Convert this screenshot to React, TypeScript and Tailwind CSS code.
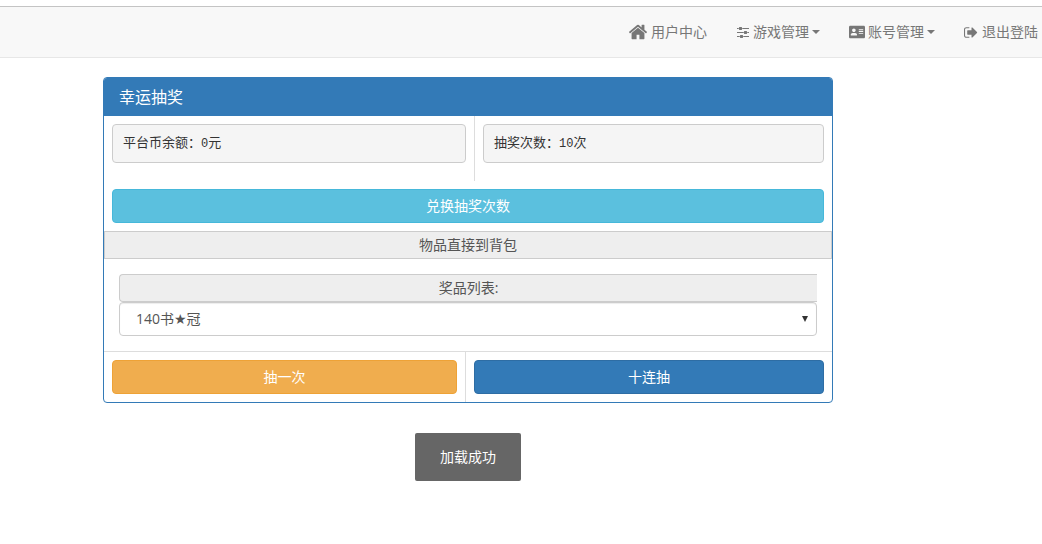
import type { ReactNode } from "react";
import { FaAddressCard } from "react-icons/fa";

const HOME =
  "M1472 992v480q0 26-19 45t-45 19h-384v-384h-256v384h-384q-26 0-45-19t-19-45v-480q0-1 .5-3t.5-3l575-474 575 474q1 2 1 6zm223-69l-62 74q-8 9-21 11h-3q-13 0-21-7l-692-577-692 577q-12 8-24 7-13-2-21-11l-62-74q-8-10-7-23.5t11-21.5l719-599q32-26 76-26t76 26l244 204v-195q0-14 9-23t23-9h192q14 0 23 9t9 23v408l219 182q10 8 11 21.5t-7 23.5z";
const SLIDERS =
  "M480 1408v128h-352v-128h352zm352-128q26 0 45 19t19 45v256q0 26-19 45t-45 19h-256q-26 0-45-19t-19-45v-256q0-26 19-45t45-19h256zm160-384v128h-864v-128h864zm-640-512v128h-224v-128h224zm1312 1024v128h-736v-128h736zm-960-1152q26 0 45 19t19 45v256q0 26-19 45t-45 19h-256q-26 0-45-19t-19-45v-256q0-26 19-45t45-19h256zm640 512q26 0 45 19t19 45v256q0 26-19 45t-45 19h-256q-26 0-45-19t-19-45v-256q0-26 19-45t45-19h256zm320 128v128h-224v-128h224zm0-512v128h-864v-128h864z";
const SIGN_OUT =
  "M640 1440q0 4 1 20t.5 26.5-3 23.5-10 19.5-20.5 6.5h-320q-119 0-203.5-84.5t-84.5-203.5v-704q0-119 84.5-203.5t203.5-84.5h320q13 0 22.5 9.5t9.5 22.5q0 4 1 20t.5 26.5-3 23.5-10 19.5-20.5 6.5h-320q-66 0-113 47t-47 113v704q0 66 47 113t113 47h312l11.5 1 11.5 3 8 5.5 7 9 2 13.5zm928-544q0 26-19 45l-544 544q-19 19-45 19t-45-19-19-45v-288h-448q-26 0-45-19t-19-45v-384q0-26 19-45t45-19h448v-288q0-26 19-45t45-19 45 19l544 544q19 19 19 45z";

function Icon({ path, className }: { path: string; className: string }) {
  return (
    <svg viewBox="0 0 1792 1792" fill="currentColor" aria-hidden="true" className={className}>
      <path d={path} />
    </svg>
  );
}

function NavItem({ icon, label, menu }: { icon: ReactNode; label: string; menu?: boolean }) {
  const style = "flex h-[50px] items-center gap-[3px] whitespace-nowrap hover:text-[#333333]";
  return (
    <li>
      {menu ? (
        <button type="button" aria-haspopup="menu" className={style}>
          {icon}
          <span>{label}</span>
          <svg viewBox="0 0 8 4" fill="currentColor" aria-hidden="true" className="h-1 w-2">
            <path d="M0 0h8L4 4z" />
          </svg>
        </button>
      ) : (
        <a href="#" className={style}>
          {icon}
          <span>{label}</span>
        </a>
      )}
    </li>
  );
}

const addon = "border border-[#cccccc] bg-[#eeeeee] text-center leading-[26px] text-[#555555]";
const button = "block h-[34px] w-full rounded border text-center text-white";
const well =
  "mb-2.5 rounded border border-[#cccccc] bg-[#f5f5f5] px-2.5 py-2 font-['Liberation_Mono','Noto_Sans_CJK_SC',monospace] text-[13px] leading-[21px] text-[#333333]";

export default function App() {
  return (
    <div className="pt-1.5 font-['Open_Sans','Noto_Sans_CJK_SC',sans-serif] text-sm leading-5 text-[#333333]">
      <nav className="mb-[19px] border-t border-b border-t-[#c4c4c4] border-b-[#e7e7e7] bg-[#f8f8f8]">
        <ul className="flex justify-end gap-[29px] pr-1 text-[#777777]">
          <NavItem icon={<Icon path={HOME} className="size-5" />} label="用户中心" />
          <NavItem icon={<Icon path={SLIDERS} className="size-[14px]" />} label="游戏管理" menu />
          <NavItem icon={<FaAddressCard aria-hidden="true" className="size-4" />} label="账号管理" menu />
          <NavItem icon={<Icon path={SIGN_OUT} className="size-[15px]" />} label="退出登陆" />
        </ul>
      </nav>

      <main className="pr-[209px] pl-[103px]">
        <section className="overflow-hidden rounded border border-[#337ab7] bg-white">
          <h1 className="bg-[#337ab7] px-[15px] py-[9px] text-base leading-5 text-white">幸运抽奖</h1>

          <div className="grid grid-cols-[371fr_357fr]">
            <div className="border-r border-[#dddddd] p-2">
              <p className={well}>
                平台币余额：<span className="text-xs">0</span>元
              </p>
            </div>
            <div className="p-2">
              <p className={well}>
                抽奖次数：<span className="text-xs">10</span>次
              </p>
            </div>
          </div>

          <div className="p-2">
            <button type="button" className={`${button} border-[#46b8da] bg-[#5bc0de]`}>
              兑换抽奖次数
            </button>
          </div>

          <div className={addon}>物品直接到背包</div>

          <div className="p-[15px]">
            <label htmlFor="prize" className={`${addon} block rounded-l border-r-0`}>
              奖品列表:
            </label>
            <div className="relative">
              <select
                id="prize"
                className="block h-[34px] w-full appearance-none rounded border border-[#cccccc] bg-white px-4 font-['Open_Sans','DejaVu_Sans','Noto_Sans_CJK_SC',sans-serif] text-[#555555] shadow-[inset_0_1px_1px_rgba(0,0,0,0.075)]"
              >
                <option>140书★冠</option>
              </select>
              <svg
                viewBox="0 0 6 6"
                fill="#333333"
                aria-hidden="true"
                className="pointer-events-none absolute top-3.5 right-[9px] size-1.5"
              >
                <path d="M0 0h6L3 6z" />
              </svg>
            </div>
          </div>

          <div className="grid grid-cols-[362fr_366fr] border-t border-[#dddddd]">
            <div className="border-r border-[#dddddd] p-2">
              <button type="button" className={`${button} border-[#eea236] bg-[#f0ad4e]`}>
                抽一次
              </button>
            </div>
            <div className="p-2">
              <button type="button" className={`${button} border-[#2e6da4] bg-[#337ab7]`}>
                十连抽
              </button>
            </div>
          </div>
        </section>

        <div role="status" className="mx-auto mt-[30px] w-fit rounded-xs bg-[#666666] px-[25px] py-3.5 text-white">
          加载成功
        </div>
      </main>
    </div>
  );
}
